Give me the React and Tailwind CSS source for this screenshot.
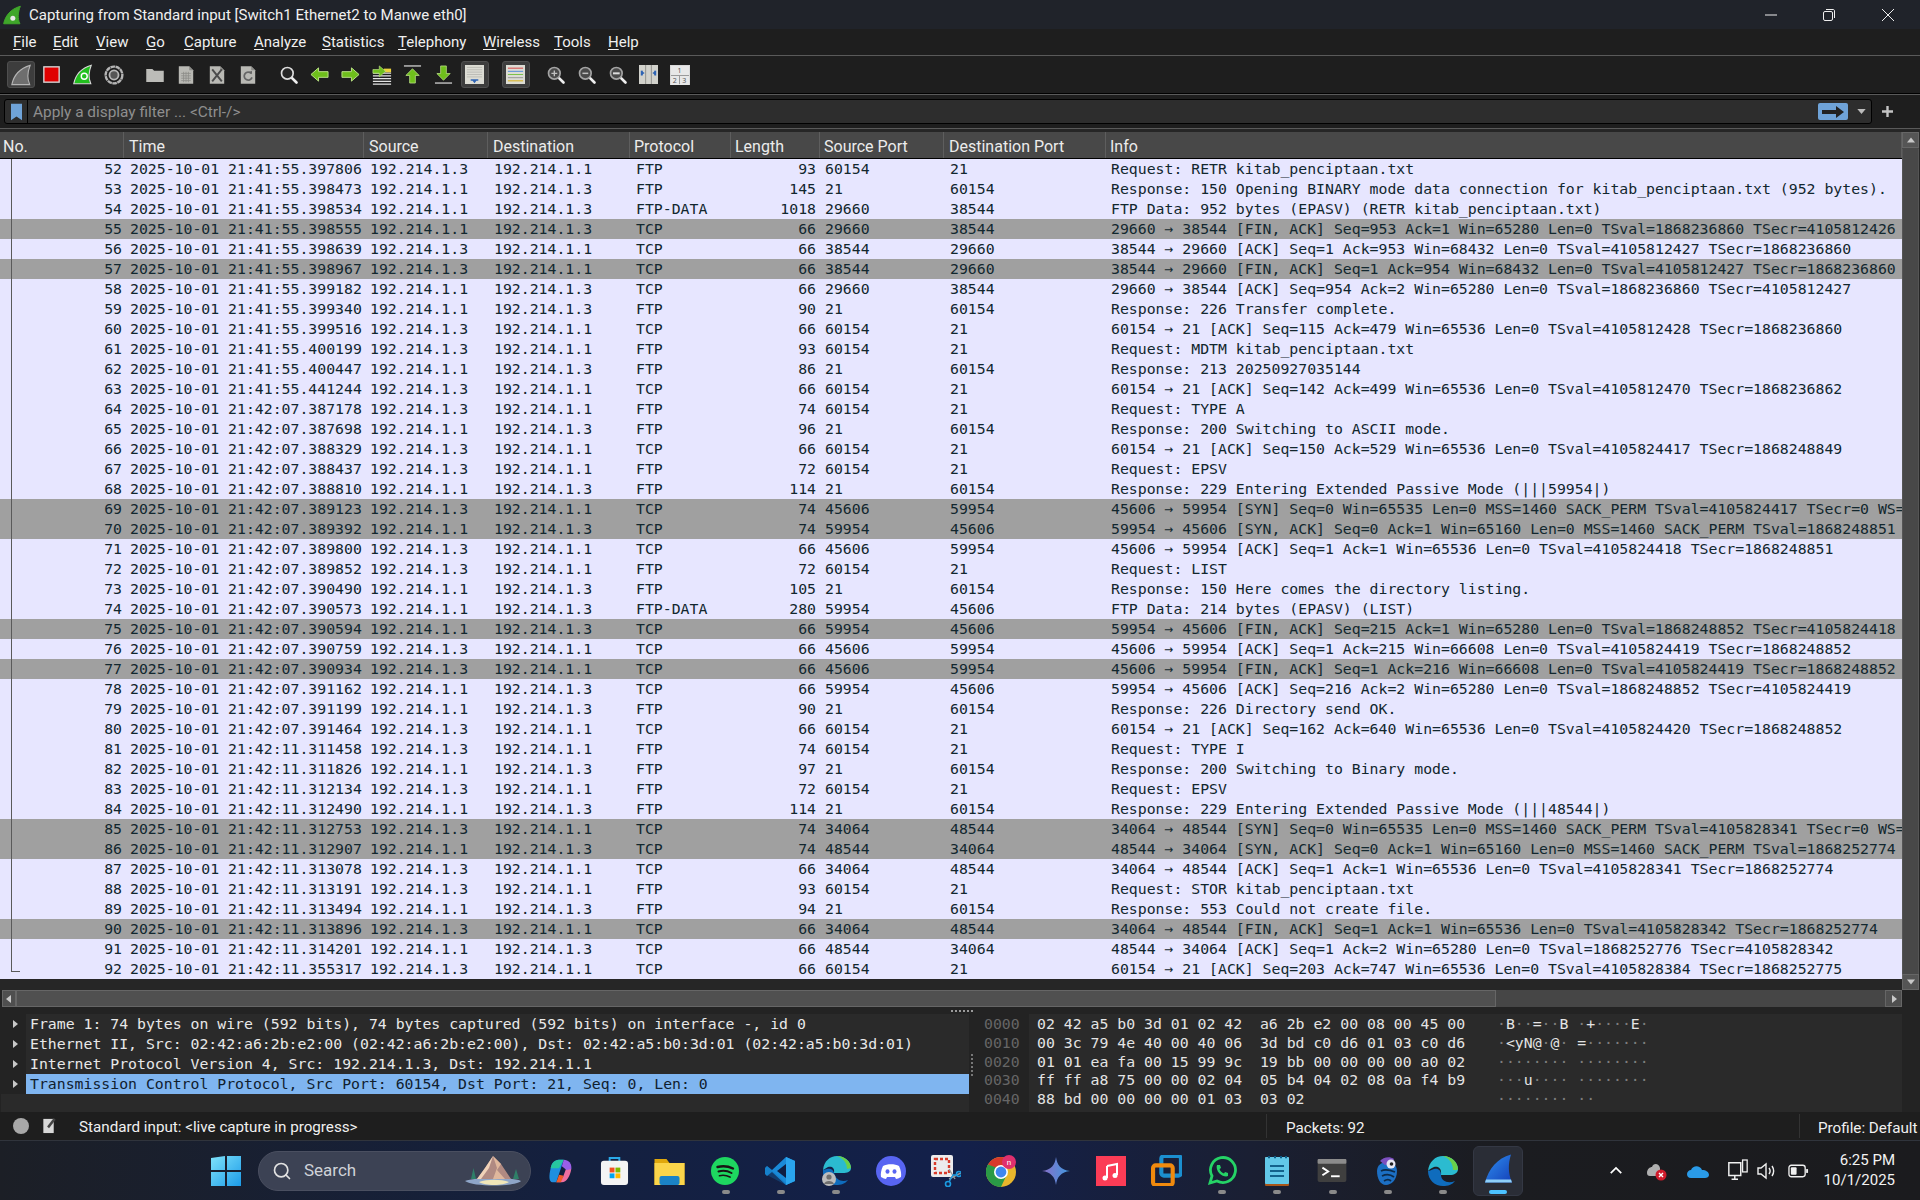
import React from 'react';
import { Search } from 'lucide-react';

const A = '192.214.1.3';
const B = '192.214.1.1';
const ui = "font-['Roboto',sans-serif]";
const mono = "font-['DejaVu_Sans_Mono',monospace] text-[14.82px]";

// no, time, source, dest, proto, length, sport, dport, info, dark
const rows = [
  [52, '21:41:55.397806', A, B, 'FTP', 93, 60154, 21, 'Request: RETR kitab_penciptaan.txt'],
  [53, '21:41:55.398473', B, A, 'FTP', 145, 21, 60154, 'Response: 150 Opening BINARY mode data connection for kitab_penciptaan.txt (952 bytes).'],
  [54, '21:41:55.398534', B, A, 'FTP-DATA', 1018, 29660, 38544, 'FTP Data: 952 bytes (EPASV) (RETR kitab_penciptaan.txt)'],
  [55, '21:41:55.398555', B, A, 'TCP', 66, 29660, 38544, '29660 → 38544 [FIN, ACK] Seq=953 Ack=1 Win=65280 Len=0 TSval=1868236860 TSecr=4105812426', 1],
  [56, '21:41:55.398639', A, B, 'TCP', 66, 38544, 29660, '38544 → 29660 [ACK] Seq=1 Ack=953 Win=68432 Len=0 TSval=4105812427 TSecr=1868236860'],
  [57, '21:41:55.398967', A, B, 'TCP', 66, 38544, 29660, '38544 → 29660 [FIN, ACK] Seq=1 Ack=954 Win=68432 Len=0 TSval=4105812427 TSecr=1868236860', 1],
  [58, '21:41:55.399182', B, A, 'TCP', 66, 29660, 38544, '29660 → 38544 [ACK] Seq=954 Ack=2 Win=65280 Len=0 TSval=1868236860 TSecr=4105812427'],
  [59, '21:41:55.399340', B, A, 'FTP', 90, 21, 60154, 'Response: 226 Transfer complete.'],
  [60, '21:41:55.399516', A, B, 'TCP', 66, 60154, 21, '60154 → 21 [ACK] Seq=115 Ack=479 Win=65536 Len=0 TSval=4105812428 TSecr=1868236860'],
  [61, '21:41:55.400199', A, B, 'FTP', 93, 60154, 21, 'Request: MDTM kitab_penciptaan.txt'],
  [62, '21:41:55.400447', B, A, 'FTP', 86, 21, 60154, 'Response: 213 20250927035144'],
  [63, '21:41:55.441244', A, B, 'TCP', 66, 60154, 21, '60154 → 21 [ACK] Seq=142 Ack=499 Win=65536 Len=0 TSval=4105812470 TSecr=1868236862'],
  [64, '21:42:07.387178', A, B, 'FTP', 74, 60154, 21, 'Request: TYPE A'],
  [65, '21:42:07.387698', B, A, 'FTP', 96, 21, 60154, 'Response: 200 Switching to ASCII mode.'],
  [66, '21:42:07.388329', A, B, 'TCP', 66, 60154, 21, '60154 → 21 [ACK] Seq=150 Ack=529 Win=65536 Len=0 TSval=4105824417 TSecr=1868248849'],
  [67, '21:42:07.388437', A, B, 'FTP', 72, 60154, 21, 'Request: EPSV'],
  [68, '21:42:07.388810', B, A, 'FTP', 114, 21, 60154, 'Response: 229 Entering Extended Passive Mode (|||59954|)'],
  [69, '21:42:07.389123', A, B, 'TCP', 74, 45606, 59954, '45606 → 59954 [SYN] Seq=0 Win=65535 Len=0 MSS=1460 SACK_PERM TSval=4105824417 TSecr=0 WS=', 1],
  [70, '21:42:07.389392', B, A, 'TCP', 74, 59954, 45606, '59954 → 45606 [SYN, ACK] Seq=0 Ack=1 Win=65160 Len=0 MSS=1460 SACK_PERM TSval=1868248851', 1],
  [71, '21:42:07.389800', A, B, 'TCP', 66, 45606, 59954, '45606 → 59954 [ACK] Seq=1 Ack=1 Win=65536 Len=0 TSval=4105824418 TSecr=1868248851'],
  [72, '21:42:07.389852', A, B, 'FTP', 72, 60154, 21, 'Request: LIST'],
  [73, '21:42:07.390490', B, A, 'FTP', 105, 21, 60154, 'Response: 150 Here comes the directory listing.'],
  [74, '21:42:07.390573', B, A, 'FTP-DATA', 280, 59954, 45606, 'FTP Data: 214 bytes (EPASV) (LIST)'],
  [75, '21:42:07.390594', B, A, 'TCP', 66, 59954, 45606, '59954 → 45606 [FIN, ACK] Seq=215 Ack=1 Win=65280 Len=0 TSval=1868248852 TSecr=4105824418', 1],
  [76, '21:42:07.390759', A, B, 'TCP', 66, 45606, 59954, '45606 → 59954 [ACK] Seq=1 Ack=215 Win=66608 Len=0 TSval=4105824419 TSecr=1868248852'],
  [77, '21:42:07.390934', A, B, 'TCP', 66, 45606, 59954, '45606 → 59954 [FIN, ACK] Seq=1 Ack=216 Win=66608 Len=0 TSval=4105824419 TSecr=1868248852', 1],
  [78, '21:42:07.391162', B, A, 'TCP', 66, 59954, 45606, '59954 → 45606 [ACK] Seq=216 Ack=2 Win=65280 Len=0 TSval=1868248852 TSecr=4105824419'],
  [79, '21:42:07.391199', B, A, 'FTP', 90, 21, 60154, 'Response: 226 Directory send OK.'],
  [80, '21:42:07.391464', A, B, 'TCP', 66, 60154, 21, '60154 → 21 [ACK] Seq=162 Ack=640 Win=65536 Len=0 TSval=4105824420 TSecr=1868248852'],
  [81, '21:42:11.311458', A, B, 'FTP', 74, 60154, 21, 'Request: TYPE I'],
  [82, '21:42:11.311826', B, A, 'FTP', 97, 21, 60154, 'Response: 200 Switching to Binary mode.'],
  [83, '21:42:11.312134', A, B, 'FTP', 72, 60154, 21, 'Request: EPSV'],
  [84, '21:42:11.312490', B, A, 'FTP', 114, 21, 60154, 'Response: 229 Entering Extended Passive Mode (|||48544|)'],
  [85, '21:42:11.312753', A, B, 'TCP', 74, 34064, 48544, '34064 → 48544 [SYN] Seq=0 Win=65535 Len=0 MSS=1460 SACK_PERM TSval=4105828341 TSecr=0 WS=', 1],
  [86, '21:42:11.312907', B, A, 'TCP', 74, 48544, 34064, '48544 → 34064 [SYN, ACK] Seq=0 Ack=1 Win=65160 Len=0 MSS=1460 SACK_PERM TSval=1868252774', 1],
  [87, '21:42:11.313078', A, B, 'TCP', 66, 34064, 48544, '34064 → 48544 [ACK] Seq=1 Ack=1 Win=65536 Len=0 TSval=4105828341 TSecr=1868252774'],
  [88, '21:42:11.313191', A, B, 'FTP', 93, 60154, 21, 'Request: STOR kitab_penciptaan.txt'],
  [89, '21:42:11.313494', B, A, 'FTP', 94, 21, 60154, 'Response: 553 Could not create file.'],
  [90, '21:42:11.313896', A, B, 'TCP', 66, 34064, 48544, '34064 → 48544 [FIN, ACK] Seq=1 Ack=1 Win=65536 Len=0 TSval=4105828342 TSecr=1868252774', 1],
  [91, '21:42:11.314201', B, A, 'TCP', 66, 48544, 34064, '48544 → 34064 [ACK] Seq=1 Ack=2 Win=65280 Len=0 TSval=1868252776 TSecr=4105828342'],
  [92, '21:42:11.355317', A, B, 'TCP', 66, 60154, 21, '60154 → 21 [ACK] Seq=203 Ack=747 Win=65536 Len=0 TSval=4105828384 TSecr=1868252775'],
];

const columns = 'grid-cols-[124px_240px_124px_142px_101px_89px_124px_162px_796px]';
const headers = [
  ['No.', 'pl-[3px]'],
  ['Time', 'pl-[5px]'],
  ['Source', 'pl-[5px]'],
  ['Destination', 'pl-[5px]'],
  ['Protocol', 'pl-[4px]'],
  ['Length', 'pl-[4px]'],
  ['Source Port', 'pl-[4px]'],
  ['Destination Port', 'pl-[5px]'],
  ['Info', 'pl-[4px]'],
];

const details = [
  'Frame 1: 74 bytes on wire (592 bits), 74 bytes captured (592 bits) on interface -, id 0',
  'Ethernet II, Src: 02:42:a6:2b:e2:00 (02:42:a6:2b:e2:00), Dst: 02:42:a5:b0:3d:01 (02:42:a5:b0:3d:01)',
  'Internet Protocol Version 4, Src: 192.214.1.3, Dst: 192.214.1.1',
  'Transmission Control Protocol, Src Port: 60154, Dst Port: 21, Seq: 0, Len: 0',
];

const bytes = [
  ['0000', '02 42 a5 b0 3d 01 02 42  a6 2b e2 00 08 00 45 00', '·B··=··B ·+····E·'],
  ['0010', '00 3c 79 4e 40 00 40 06  3d bd c0 d6 01 03 c0 d6', '·<yN@·@· =·······'],
  ['0020', '01 01 ea fa 00 15 99 9c  19 bb 00 00 00 00 a0 02', '········ ········'],
  ['0030', 'ff ff a8 75 00 00 02 04  05 b4 04 02 08 0a f4 b9', '···u···· ········'],
  ['0040', '88 bd 00 00 00 00 01 03  03 02', '········ ··'],
];

const menus = ['File', 'Edit', 'View', 'Go', 'Capture', 'Analyze', 'Statistics', 'Telephony', 'Wireless', 'Tools', 'Help'];

const Fin = ({ fill = '#3fa62a', stroke = '#3fa62a', className = 'w-6 h-6', children }) => (
  <svg viewBox="0 0 24 24" className={className}>
    <path d="M2 22.5C4 13 10 5 22 1.5C19 9 18.5 16 21.5 22.5Z" fill={fill} stroke={stroke} strokeWidth="1.2" />
    {children}
  </svg>
);

const Doc = ({ children }) => (
  <svg viewBox="0 0 20 24" className="w-[16px] h-[20px]">
    <path d="M1 1H14L19 6V23H1Z" fill="#b9b9b4" />
    <path d="M14 1L19 6H14Z" fill="#8c8c88" />
    {children}
  </svg>
);

const Glass = ({ children, white }) => (
  <svg viewBox="0 0 24 24" className="w-[20px] h-[20px]">
    <path d="M14.5 14.5L21 21" stroke="#eee" strokeWidth="3.2" strokeLinecap="round" />
    <circle cx="10" cy="10" r="7" fill={white ? '#262626' : '#4a4a4a'} stroke={white ? '#ddd' : '#a4a4a4'} strokeWidth="2" />
    {children}
  </svg>
);

const Arrow = ({ d }) => (
  <svg viewBox="0 0 20 20" className="w-[19px] h-[19px]">
    <path d={d} fill="#6fbf1c" stroke="#bfe58a" strokeWidth="1" />
  </svg>
);

const Lines = ({ children }) => (
  <svg viewBox="0 0 20 24" preserveAspectRatio="none" className="w-[19px] h-[19px]">
    <rect width="20" height="24" fill="#dcdcd4" />
    {children}
  </svg>
);

const group1 = [
  { on: true, icon: <Fin fill="#6e6e6e" stroke="#b5b5b5" className="w-[22px] h-[22px]" /> },
  {
    icon: (
      <svg viewBox="0 0 20 20" className="w-[17px] h-[17px]">
        <rect x="1" y="1" width="18" height="18" fill="#e00000" stroke="#d8d8d8" strokeWidth="1.6" />
      </svg>
    ),
  },
  {
    icon: (
      <Fin fill="#22c01e" stroke="#d9d9d9" className="w-[21px] h-[21px]">
        <circle cx="14" cy="14" r="3.4" fill="none" stroke="#fff" strokeWidth="1.6" />
      </Fin>
    ),
  },
  {
    icon: (
      <svg viewBox="0 0 22 22" className="w-[20px] h-[20px]">
        <circle cx="11" cy="11" r="9.2" fill="none" stroke="#b5b5b5" strokeWidth="2.6" strokeDasharray="5 .6" />
        <circle cx="11" cy="11" r="5" fill="#555" stroke="#b5b5b5" strokeWidth="2" />
      </svg>
    ),
  },
];

const group2 = [
  {
    icon: (
      <svg viewBox="0 0 20 16" className="w-[18px] h-[14px]">
        <path d="M0 1H7L9 3H20V16H0Z" fill="#bcbcb8" />
      </svg>
    ),
  },
  {
    icon: (
      <Doc>
        <path d="M4 10H16M4 13H16M4 16H16M4 19H16M7 8V21M10 8V21M13 8V21" stroke="#8b8b88" strokeWidth="1" />
      </Doc>
    ),
  },
  {
    icon: (
      <Doc>
        <path d="M4 5L16 20M16 5L4 20" stroke="#4b4b4b" strokeWidth="2.4" />
      </Doc>
    ),
  },
  {
    icon: (
      <Doc>
        <path d="M14 10A5 5 0 1 0 15 15" fill="none" stroke="#666" strokeWidth="2.2" />
        <path d="M11 8L15 7L15 11Z" fill="#666" />
      </Doc>
    ),
  },
];

const group3 = [
  { icon: <Glass white /> },
  { icon: <Arrow d="M1 10L9 3V7H19V13H9V17Z" /> },
  { icon: <Arrow d="M19 10L11 3V7H1V13H11V17Z" /> },
  {
    icon: (
      <svg viewBox="0 0 22 22" className="w-[20px] h-[20px]">
        <path d="M1 9H21M1 12H21M1 15H21M1 18H21M1 21H21" stroke="#e4e4e4" strokeWidth="1.4" />
        <rect x="13" y="4" width="8" height="4" fill="#ecd23e" />
        <path d="M1 5H8V1L15 7L8 13V9H1Z" fill="#6fbf1c" stroke="#bfe58a" strokeWidth=".7" />
      </svg>
    ),
  },
  {
    icon: (
      <svg viewBox="0 0 20 20" className="w-[19px] h-[19px]">
        <path d="M1 1H19" stroke="#b8b8b8" strokeWidth="1.6" />
        <path d="M10 4L17 11H13V19H7V11H3Z" fill="#6fbf1c" stroke="#bfe58a" strokeWidth=".8" />
      </svg>
    ),
  },
  {
    icon: (
      <svg viewBox="0 0 20 20" className="w-[19px] h-[19px]">
        <path d="M1 19H19" stroke="#b8b8b8" strokeWidth="1.6" />
        <path d="M10 16L17 9H13V1H7V9H3Z" fill="#6fbf1c" stroke="#bfe58a" strokeWidth=".8" />
      </svg>
    ),
  },
  {
    on: true,
    icon: (
      <Lines>
        <path d="M2 3H18M2 6H18M2 9H18M2 12H18M2 15H18" stroke="#b0b0aa" strokeWidth=".8" />
        <path d="M6 18H14V20H12L10 23L8 20H6Z" fill="#2f64b4" />
      </Lines>
    ),
  },
];

const group4 = [
  {
    on: true,
    icon: (
      <Lines>
        <path d="M2 4H18" stroke="#d84a4a" strokeWidth="1.3" />
        <path d="M2 8H18" stroke="#5a8fd8" strokeWidth="1.3" />
        <path d="M2 12H18" stroke="#7dc24a" strokeWidth="1.3" />
        <path d="M2 16H18" stroke="#9a9a9a" strokeWidth="1.3" />
        <path d="M2 20H18" stroke="#d8b21c" strokeWidth="1.3" />
      </Lines>
    ),
  },
];

const group5 = [
  {
    icon: (
      <Glass>
        <path d="M6.5 10H13.5M10 6.5V13.5" stroke="#c0c0c0" strokeWidth="1.6" />
      </Glass>
    ),
  },
  {
    icon: (
      <Glass>
        <path d="M6.5 10H13.5" stroke="#c0c0c0" strokeWidth="1.8" />
      </Glass>
    ),
  },
  {
    icon: (
      <Glass>
        <path d="M6 10H14" stroke="#dcdcdc" strokeWidth="2.4" />
      </Glass>
    ),
  },
  {
    icon: (
      <svg viewBox="0 0 20 20" className="w-[19px] h-[19px]">
        <rect width="20" height="20" fill="#d2d2cc" />
        <path d="M7 0V20M13 0V20" stroke="#8e8e8a" strokeWidth="1" />
        <path d="M2 6L6 8.5L2 11ZM18 6L14 8.5L18 11Z" fill="#2f64b4" />
        <rect x="2" y="6" width="2" height="5" fill="#2f64b4" />
        <rect x="16" y="6" width="2" height="5" fill="#2f64b4" />
      </svg>
    ),
  },
  {
    icon: (
      <div className="w-[20px] h-[20px] bg-[#9a9a9a] grid grid-cols-2 gap-[1px] border border-[#dadada]">
        <span className="col-span-2 bg-[#e8e8e8] text-[7px] leading-[9px] text-center text-[#555]">1</span>
        <span className="bg-[#e8e8e8] text-[7px] leading-[9px] text-center text-[#555]">2</span>
        <span className="bg-[#e8e8e8] text-[7px] leading-[9px] text-center text-[#555]">3</span>
      </div>
    ),
  },
];

const ToolGroup = ({ items, className = '' }) => (
  <div className={`flex ${className}`}>
    {items.map((item, i) => (
      <div key={i} className="w-[31px] h-[37px] flex items-center justify-center">
        <div
          className={`w-[28px] h-[27px] flex items-center justify-center rounded-[3px] ${
            item.on ? 'bg-[#3d3d3d] border border-[#4f4f4f]' : ''
          }`}
        >
          {item.icon}
        </div>
      </div>
    ))}
  </div>
);

const Triangle = ({ dir }) => (
  <svg viewBox="0 0 10 10" className="w-[10px] h-[10px]">
    <path
      d={
        dir === 'up' ? 'M1 7.5L5 2.5L9 7.5Z' : dir === 'down' ? 'M1 2.5L5 7.5L9 2.5Z' : dir === 'left' ? 'M7 1L2 5L7 9Z' : 'M3 1L8 5L3 9Z'
      }
      fill="#c8c8c8"
    />
  </svg>
);

const SectionLine = () => <div className="h-[1px] bg-[#5a5a5a] shrink-0" />;

const PacketRow = ({ row }) => {
  const [no, time, source, dest, proto, length, sport, dport, info, dark] = row;
  return (
    <div
      className={`grid ${columns} h-[20px] leading-[20px] text-[#12272e] whitespace-pre overflow-hidden ${
        dark ? 'bg-[#a0a0a0]' : 'bg-[#e7e6ff]'
      }`}
    >
      <div className="text-right pr-[2px]">{no}</div>
      <div className="pl-[6px]">2025-10-01 {time}</div>
      <div className="pl-[6px]">{source}</div>
      <div className="pl-[6px]">{dest}</div>
      <div className="pl-[6px]">{proto}</div>
      <div className="text-right pr-[4px]">{length}</div>
      <div className="pl-[5px]">{sport}</div>
      <div className="pl-[6px]">{dport}</div>
      <div className="pl-[5px]">{info}</div>
    </div>
  );
};

const PacketList = () => (
  <div className="flex h-[858px] shrink-0 bg-[#262626]">
    <div className="w-[1902px] relative flex flex-col">
      <div className={`grid ${columns} h-[27px] bg-[#484848] border-b border-black text-[#ececec] text-[16px] leading-[30px] ${ui}`}>
        {headers.map(([label, pad]) => (
          <div key={label} className={`${pad} border-r border-[#5e5e5e] overflow-hidden whitespace-nowrap`}>
            {label}
          </div>
        ))}
      </div>
      <div className={mono}>
        {rows.map((row) => (
          <PacketRow key={row[0]} row={row} />
        ))}
      </div>
      {/* conversation bracket drawn over the packet rows */}
      <div className="absolute left-[11px] top-[27px] w-[9px] h-[813px] border-l border-b border-[#5a5a5a]" />
    </div>
    <div className="w-[17px] flex flex-col bg-[#484848]">
      <div className="h-[16px] flex items-center justify-center bg-[#555] border border-[#666]">
        <Triangle dir="up" />
      </div>
      <div className="flex-1 mt-[1px] border-x border-[#555]" />
      <div className="h-[16px] flex items-center justify-center bg-[#555] border border-[#666]">
        <Triangle dir="down" />
      </div>
    </div>
  </div>
);

const HScroll = () => (
  <div className="flex h-[17px] shrink-0 bg-[#232323] pl-[2px] pr-[18px]">
    <div className="w-[14px] flex items-center justify-center bg-[#4f4f4f] border border-[#666]">
      <Triangle dir="left" />
    </div>
    <div className="w-[1480px] bg-[#505050] border border-[#666]" />
    <div className="flex-1 bg-[#464646]" />
    <div className="w-[17px] flex items-center justify-center bg-[#4f4f4f] border border-[#666]">
      <Triangle dir="right" />
    </div>
  </div>
);

const ByteRow = ({ row }) => {
  const [offset, hex, ascii] = row;
  return (
    <div className="flex h-[18.75px] leading-[18.75px] whitespace-pre">
      <div className="w-[53px] -ml-[53px] text-[#666]">{offset}</div>
      <div className="w-[460px] text-[#e4e4e4]">{hex}</div>
      <div>
        {ascii.split('').map((ch, i) => (
          <span key={i} className={ch === '·' ? 'text-[#7d7d7d]' : 'text-[#e4e4e4]'}>
            {ch}
          </span>
        ))}
      </div>
    </div>
  );
};

const DetailPanes = () => (
  <div className={`flex h-[105px] shrink-0 bg-[#232323] pt-[7px] relative ${mono}`}>
    <div className="w-[968px] bg-[#2a2a2a] flex flex-col ml-[1px] h-[98px] overflow-hidden">
      {details.map((line, i) => (
        <div key={line} className="flex h-[20px] leading-[20px] whitespace-pre">
          <div className="w-[25px] h-[20px] flex items-center justify-end pr-[6px] bg-[#232323]">
            <Triangle dir="right" />
          </div>
          <div className={`flex-1 pl-[4px] ${i === 3 ? 'bg-[#7fb5f0] text-[#10202e]' : 'text-[#e8e8e8]'}`}>{line}</div>
        </div>
      ))}
    </div>
    <div className="w-[60px]" />
    <div className="w-[873px] h-[98px] bg-[#2a2a2a] pl-[8px] pt-[1px]">
      {bytes.map((row) => (
        <ByteRow key={row[0]} row={row} />
      ))}
    </div>
    {/* splitter grips lie over the panes */}
    <div className="absolute left-[951px] top-[3px] w-[22px] h-[3px] border-t-2 border-dotted border-[#9a9a9a]" />
    <div className="absolute left-[971px] top-[47px] h-[22px] border-l-2 border-dotted border-[#777]" />
  </div>
);

const StatusBar = () => (
  <div className={`flex items-center h-[28px] shrink-0 bg-[#1e1e1e] text-[#f0f0f0] text-[15.200px] ${ui}`}>
    <div className="w-[1266px] flex items-center pl-[13px]">
      <div className="w-[16px] h-[16px] rounded-full bg-[#a8a8a8]" />
      <svg viewBox="0 0 14 18" className="w-[14px] h-[17px] ml-[13px]">
        <rect x="1" y="2" width="11" height="15" fill="#d8d8d8" />
        <path d="M5 10L12 1L14 3L7 12Z" fill="#444" />
      </svg>
      <span className="ml-[23px] pt-[3px]">Standard input: &lt;live capture in progress&gt;</span>
    </div>
    <div className="w-[533px] h-[24px] border-l border-[#333] pl-[19px] leading-[28px]">Packets: 92</div>
    <div className="flex-1 h-[24px] border-l border-[#333] pl-[18px] leading-[28px] whitespace-nowrap">Profile: Default</div>
  </div>
);

const apps = [
  {
    icon: (
      <svg viewBox="0 0 30 30" className="w-[28px] h-[28px]">
        <path d="M5 12C6 5 11 3 14 3H19L11 27H7C3 27 3 20 5 12Z" fill="#1f8fe0" />
        <path d="M5 12C6 6 10 3 14 3H19L14 12Z" fill="#27c6a0" />
        <path d="M11 27H17C22 27 26 20 27 13C27 9 26 7 24 6L18 22Z" fill="#ef6fa0" />
        <path d="M19 3C24 3 28 7 27 13L22 14L17 10Z" fill="#9a5fe8" />
        <path d="M14 19L11 27H16L19 20Z" fill="#f25c2a" />
      </svg>
    ),
  },
  {
    icon: (
      <svg viewBox="0 0 30 32" className="w-[29px] h-[31px]">
        <path d="M10 8V3H20V8" fill="none" stroke="#2aa9e8" strokeWidth="2" />
        <rect x="1" y="6" width="28" height="25" rx="3" fill="#f4f4f4" />
        <rect x="10" y="13" width="5" height="5" fill="#f25022" />
        <rect x="16" y="13" width="5" height="5" fill="#7fba00" />
        <rect x="10" y="19" width="5" height="5" fill="#00a4ef" />
        <rect x="16" y="19" width="5" height="5" fill="#ffb900" />
      </svg>
    ),
  },
  {
    icon: (
      <svg viewBox="0 0 30 28" className="w-[31px] h-[28px]">
        <path d="M0 2H12L15 6H30V28H0Z" fill="#e0a80c" />
        <rect y="6" width="30" height="22" fill="#fbd54a" />
        <rect x="5" y="19" width="20" height="9" rx="2" fill="#1b83c6" />
      </svg>
    ),
  },
  {
    dot: true,
    icon: (
      <svg viewBox="0 0 28 28" className="w-[28px] h-[28px]">
        <circle cx="14" cy="14" r="14" fill="#1ed760" />
        <path d="M6.5 10C12 8.5 17 9 22 11.5" stroke="#191414" strokeWidth="2.4" fill="none" strokeLinecap="round" />
        <path d="M7.5 14.5C12 13.2 16.5 13.7 20.5 16" stroke="#191414" strokeWidth="2" fill="none" strokeLinecap="round" />
        <path d="M8.5 18.7C12 17.8 15.5 18.2 19 20" stroke="#191414" strokeWidth="1.7" fill="none" strokeLinecap="round" />
      </svg>
    ),
  },
  {
    dot: true,
    icon: (
      <svg viewBox="0 0 30 30" className="w-[30px] h-[30px]">
        <path d="M21 1L30 5V25L21 29L7 16L2 20L0 18V12L2 10L7 14Z" fill="#1a8ad8" />
        <path d="M21 8L12 15L21 22Z" fill="#0f1e42" />
        <path d="M21 1L30 5V25L21 29Z" fill="#2aa5ee" />
        <path d="M2 10L21 27V29L0 18V12Z" fill="#0e6fb8" opacity=".35" />
      </svg>
    ),
  },
  {
    dot: true,
    icon: (
      <svg viewBox="0 0 30 32" className="w-[30px] h-[32px]">
        <path d="M2 15C3 6 9 1 16 1C24 1 30 7 30 13C30 17 26 18 22 18H13C14 12 10 11 7 12Z" fill="#2bbbd0" />
        <path d="M30 13C30 7 24 1 16 1C22 3 26 8 26 14Z" fill="#6ad04a" />
        <path d="M2 15C1 24 8 30 15 30C20 30 24 29 27 25C22 27 15 26 13 18C12 14 9 13 6 14Z" fill="#0f6cbd" />
        <circle cx="8" cy="24" r="7" fill="#bdbdbd" />
        <circle cx="8" cy="22" r="2.6" fill="#6f6f6f" />
        <path d="M3 29C4 25 12 25 13 29Z" fill="#6f6f6f" />
      </svg>
    ),
  },
  {
    icon: (
      <svg viewBox="0 0 30 30" className="w-[30px] h-[30px]">
        <circle cx="15" cy="15" r="15" fill="#5865f2" />
        <path d="M7 10C11 7.5 19 7.5 23 10C25 14 25.5 18 25 21C23 22 21 23 20 23L19 21H11L10 23C9 23 7 22 5 21C4.500 18 5 14 7 10Z" fill="#fff" />
        <ellipse cx="11.500" cy="15.500" rx="2" ry="2.300" fill="#5865f2" />
        <ellipse cx="18.500" cy="15.500" rx="2" ry="2.300" fill="#5865f2" />
      </svg>
    ),
  },
  {
    icon: (
      <svg viewBox="0 0 30 32" className="w-[30px] h-[32px]">
        <rect x="0" y="0" width="22" height="22" rx="2" fill="#ececec" />
        <rect x="4" y="4" width="14" height="14" fill="none" stroke="#d83b2a" strokeWidth="2.400" strokeDasharray="3 2" />
        <path d="M18 14L24 24M18 24L30 18" stroke="#9a9a9a" strokeWidth="1.400" />
        <circle cx="17" cy="29" r="2.500" fill="none" stroke="#1b9ae0" strokeWidth="1.600" />
        <circle cx="28" cy="19" r="2.500" fill="none" stroke="#1b9ae0" strokeWidth="1.600" />
        <path d="M18 27L22 20L26 20" fill="none" stroke="#1b9ae0" strokeWidth="1.400" />
      </svg>
    ),
  },
  {
    icon: (
      <svg viewBox="0 0 30 32" className="w-[30px] h-[32px]">
        <circle cx="15" cy="17" r="15" fill="#e8b62c" />
        <path d="M15 17L2 9.500A15 15 0 0 1 28 9.500Z" fill="#d8392b" />
        <path d="M2 9.500A15 15 0 0 0 15 32L22 17Z" fill="#2a9a46" />
        <circle cx="15" cy="17" r="7" fill="#fff" />
        <circle cx="15" cy="17" r="5.400" fill="#3f86f0" />
        <circle cx="23" cy="7" r="7" fill="#e0306e" />
        <text x="23" y="10" textAnchor="middle" fontSize="8" fill="#fff" fontFamily="Roboto, sans-serif">n</text>
      </svg>
    ),
  },
  {
    icon: (
      <svg viewBox="0 0 30 30" className="w-[30px] h-[30px]">
        <defs>
          <linearGradient id="gem" x1="0" y1="0" x2="1" y2="0">
            <stop offset="0" stopColor="#8a6ec8" />
            <stop offset="1" stopColor="#3f9ae0" />
          </linearGradient>
        </defs>
        <path d="M15 1C16 9 20 14 29 15C20 16 16 21 15 29C14 21 10 16 1 15C10 14 14 9 15 1Z" fill="url(#gem)" />
      </svg>
    ),
  },
  {
    icon: (
      <svg viewBox="0 0 30 30" className="w-[30px] h-[30px]">
        <rect width="30" height="30" fill="#fb3c56" />
        <path d="M11 10L21 8V19" fill="none" stroke="#fff" strokeWidth="2" />
        <path d="M11 10V22" stroke="#fff" strokeWidth="2" />
        <circle cx="9" cy="22" r="2.500" fill="#fff" />
        <circle cx="19" cy="19.500" r="2.500" fill="#fff" />
      </svg>
    ),
  },
  {
    icon: (
      <svg viewBox="0 0 30 30" className="w-[31px] h-[31px]">
        <rect x="10" y="1" width="19" height="19" rx="2.500" fill="none" stroke="#1b8fd0" strokeWidth="4" />
        <rect x="2" y="10" width="19" height="19" rx="2.500" fill="none" stroke="#f08a0e" strokeWidth="4" />
      </svg>
    ),
  },
  {
    dot: true,
    icon: (
      <svg viewBox="0 0 30 30" className="w-[30px] h-[30px]">
        <path d="M3 27L5 20A12.500 12.500 0 1 1 10 25Z" fill="none" stroke="#25d366" strokeWidth="2.800" />
        <path d="M10 9C9 11 10 15 12.500 17.500C15 20 19 21 21 20L21 17L18 16L17 17.500C15 17 13 15 12.500 13L14 12L13 9Z" fill="#25d366" />
      </svg>
    ),
  },
  {
    dot: true,
    icon: (
      <svg viewBox="0 0 24 30" className="w-[24px] h-[30px]">
        <rect y="1" width="24" height="29" rx="1" fill="#a8561a" />
        <rect y="1" width="24" height="27" rx="1" fill="#62c8e8" />
        <path d="M5 10H19M5 15H19M5 20H19" stroke="#13638c" strokeWidth="2.200" />
        <path d="M3 1H5M9 1H11M15 1H17M20 1H22" stroke="#0d5a84" strokeWidth="2.400" />
      </svg>
    ),
  },
  {
    dot: true,
    icon: (
      <svg viewBox="0 0 30 24" className="w-[30px] h-[23px]">
        <rect width="30" height="24" rx="2" fill="#3f3f3f" />
        <rect width="30" height="5" rx="1" fill="#8c8c8c" />
        <path d="M5 9L11 13L5 17" fill="none" stroke="#fff" strokeWidth="2" />
        <path d="M14 18H23" stroke="#fff" strokeWidth="2" />
      </svg>
    ),
  },
  {
    dot: true,
    icon: (
      <svg viewBox="0 0 26 30" className="w-[26px] h-[30px]">
        <path d="M3 15C3 9 8 6 13 6C18 6 23 9 23 15C23 24 17 29 12 29C6 29 3 22 3 15Z" fill="#1c6fc4" />
        <path d="M6 5C9 1 16 0 20 3L18 8L11 9Z" fill="#7c4fc0" />
        <circle cx="17" cy="8" r="4.500" fill="#e8e8f4" />
        <circle cx="17.500" cy="8" r="1.800" fill="#222" />
        <path d="M7 15C11 13 16 14 21 16M8 20C12 18 16 18 20 21M10 25C13 23 15 23 17 25" stroke="#0c2a4a" strokeWidth="1.800" fill="none" />
      </svg>
    ),
  },
  {
    dot: true,
    icon: (
      <svg viewBox="0 0 30 30" className="w-[30px] h-[30px]">
        <path d="M0 15C1 6 7 0 15 0C24 0 30 7 30 13C30 17 26 19 22 19H13C14 12 10 10 6 11C3 12 1 14 0 15Z" fill="#2bbbd0" />
        <path d="M30 13C30 7 24 0 15 0C21 2 25 7 25 14C28 14 30 14 30 13Z" fill="#6ad04a" />
        <path d="M0 15C0 24 7 30 15 30C20 30 24 29 27 25C20 28 13 25 13 19C13 14 10 12 6 13C3 14 1 15 0 15Z" fill="#0f6cbd" />
      </svg>
    ),
  },
];

const Taskbar = () => (
  <div className="flex items-center flex-1 border-t border-[#30343c] bg-[linear-gradient(90deg,#1c1f26_0%,#14203f_30%,#13204a_50%,#1a1f33_65%,#1b1c20_78%,#1b1b1e_100%)] pl-[211px] relative">
    <svg viewBox="0 0 30 30" className="w-[30px] h-[30px] shrink-0">
      <defs>
        <linearGradient id="win" x1="0" y1="0" x2="1" y2="1">
          <stop offset="0" stopColor="#7fe3fb" />
          <stop offset="1" stopColor="#1c9be8" />
        </linearGradient>
      </defs>
      <path d="M0 2L14 0V14H0ZM16 0H30V14H16ZM0 16H14V30H0ZM16 16H30V30H16Z" fill="url(#win)" />
    </svg>
    <div className="ml-[17px] w-[273px] h-[40px] rounded-full bg-[#3c4254] border border-[#4a4f60] flex items-center pl-[13px] shrink-0">
      <Search className="w-[20px] h-[20px] text-[#e2e2e2]" strokeWidth={2} />
      <span className={`ml-[12px] text-[17px] text-[#cfd2d8] ${ui}`}>Search</span>
      <svg viewBox="0 0 60 34" className="w-[60px] h-[34px] ml-auto mr-[7px]">
        <path d="M2 27C12 23 48 23 58 27C52 33 10 33 2 27Z" fill="#8fa6c8" />
        <path d="M16 28C24 25 38 25 46 28C40 32 22 32 16 28Z" fill="#f0e6b8" />
        <path d="M14 25L22 14L30 2L38 10L48 25Z" fill="#b08a82" />
        <path d="M30 2L26 14L18 25H14L22 14Z" fill="#f0d2b8" />
        <path d="M30 2L38 10L34 16L42 25H30L34 14Z" fill="#dfb79c" />
        <path d="M8 25L10.500 14L13 25ZM50 25L53 15L56 25Z" fill="#2f7f68" />
      </svg>
    </div>
    <div className="flex ml-[1px]">
      {apps.map((app, i) => (
        <div key={i} className="w-[55.200px] h-[59px] relative flex items-center justify-center shrink-0">
          {app.icon}
          {app.dot && <span className="absolute left-[24px] top-[49px] w-[8px] h-[4px] rounded-full bg-[#8a8a8a]" />}
        </div>
      ))}
      <div className="w-[55px] h-[59px] flex items-center justify-center shrink-0">
        <div className="w-[50px] h-[50px] rounded-md bg-[#2a2d36] border border-[#343844] relative flex items-center justify-center">
          <svg viewBox="0 0 28 30" className="w-[28px] h-[31px] -mt-[5px]">
            <defs>
              <linearGradient id="fin" x1="0" y1="0" x2="1" y2="1">
                <stop offset="0" stopColor="#2f8ff0" />
                <stop offset="1" stopColor="#1440b8" />
              </linearGradient>
            </defs>
            <path d="M1 29C5 15 13 5 27 1C24 10 24 20 28 29Z" fill="url(#fin)" />
            <path d="M1 29H28L27 26H2Z" fill="#8fd0f8" />
          </svg>
          <span className="absolute left-[15px] top-[43px] w-[18px] h-[4px] rounded-full bg-[#4cc2ff]" />
        </div>
      </div>
    </div>
    <div className="flex items-center ml-[84px] text-[#f0f0f0]">
      <svg viewBox="0 0 16 10" className="w-[14px] h-[9px]">
        <path d="M2 8L8 2L14 8" fill="none" stroke="#fff" strokeWidth="2" />
      </svg>
      <svg viewBox="0 0 22 20" className="w-[22px] h-[20px] ml-[23px]">
        <path d="M1 12C1 8 4 6 6 6C7 2 13 2 14 7V15H4C2 15 1 14 1 12Z" fill="#b0b0b0" />
        <circle cx="15" cy="14" r="5.500" fill="#d01c2c" />
        <path d="M13 12L17 16M17 12L13 16" stroke="#fff" strokeWidth="1.400" />
      </svg>
      <svg viewBox="0 0 22 14" className="w-[22px] h-[14px] ml-[19px]">
        <path d="M4 14C1 14 0 12 0 10C0 8 2 6 4 6C6 1 13 1 15 6C19 6 22 8 22 11C22 13 20 14 18 14Z" fill="#2a9be8" />
      </svg>
      <svg viewBox="0 0 24 26" className="w-[22px] h-[24px] ml-[18px]">
        <path d="M2 4H15V18H2ZM5 22H12M8.500 18V22" fill="none" stroke="#f0f0f0" strokeWidth="1.600" />
        <rect x="17" y="1" width="5" height="13" fill="#1b1c20" stroke="#f0f0f0" strokeWidth="1.400" />
      </svg>
      <svg viewBox="0 0 20 20" className="w-[20px] h-[20px] ml-[7px]">
        <path d="M2 7H5L10 3V17L5 13H2Z" fill="none" stroke="#f0f0f0" strokeWidth="1.400" />
        <path d="M13 7C14.500 9 14.500 11 13 13M16 5C18 8 18 12 16 15" fill="none" stroke="#f0f0f0" strokeWidth="1.400" />
      </svg>
      <svg viewBox="0 0 22 14" className="w-[21px] h-[14px] ml-[12px]">
        <rect x="1" y="1" width="17" height="12" rx="2.500" fill="none" stroke="#f0f0f0" strokeWidth="1.400" />
        <rect x="3" y="3" width="6" height="8" rx="1" fill="#f0f0f0" />
        <rect x="19" y="5" width="2" height="4" fill="#f0f0f0" />
      </svg>
    </div>
    <div className={`absolute right-[25px] top-[9px] text-right text-[15px] leading-[20px] text-[#f2f2f2] ${ui}`}>
      <div>6:25 PM</div>
      <div>10/1/2025</div>
    </div>
  </div>
);

const App = () => (
  <div className="w-[1920px] h-[1200px] flex flex-col bg-[#1e1e1e] overflow-hidden">
    {/* title bar */}
    <div className={`flex items-center h-[29px] shrink-0 bg-[#20232a] text-[#f0f0f0] text-[15px] ${ui}`}>
      <Fin className="w-[20px] h-[20px] ml-[2px]">
        <circle cx="13" cy="16" r="3" fill="#e8e8e8" />
      </Fin>
      <span className="ml-[7px] pt-[1px]">Capturing from Standard input [Switch1 Ethernet2 to Manwe eth0]</span>
      <div className="ml-auto flex items-center pr-[26px]">
        <svg viewBox="0 0 12 12" className="w-[12px] h-[12px]">
          <path d="M0 6H12" stroke="#eee" strokeWidth="1" />
        </svg>
        <svg viewBox="0 0 12 12" className="w-[12px] h-[12px] ml-[46px]">
          <rect x="0.500" y="2.500" width="9" height="9" rx="1.500" fill="none" stroke="#eee" />
          <path d="M3 .500H10C11 .500 11.500 1 11.500 2V9" fill="none" stroke="#eee" />
        </svg>
        <svg viewBox="0 0 12 12" className="w-[12px] h-[12px] ml-[47px]">
          <path d="M0 0L12 12M12 0L0 12" stroke="#eee" strokeWidth="1" />
        </svg>
      </div>
    </div>
    {/* menu bar */}
    <div className={`grid grid-cols-[40px_43px_50px_38px_70px_68px_76px_85px_71px_54px_40px] items-center pl-[13px] h-[26px] shrink-0 text-[#f0f0f0] text-[15px] ${ui}`}>
      {menus.map((menu) => (
        <span key={menu}>
          <span className="underline underline-offset-2">{menu[0]}</span>
          {menu.slice(1)}
        </span>
      ))}
    </div>
    <SectionLine />
    {/* main toolbar */}
    <div className="flex items-center pl-[5px] h-[37px] shrink-0">
      <ToolGroup items={group1} />
      <ToolGroup items={group2} className="ml-[10px]" />
      <ToolGroup items={group3} className="ml-[10px]" />
      <ToolGroup items={group4} className="ml-[10px]" />
      <ToolGroup items={group5} className="ml-[9px]" />
    </div>
    <div className="h-[1px] bg-black shrink-0" />
    <SectionLine />
    {/* display filter */}
    <div className="flex items-center h-[33px] shrink-0 pl-[4px]">
      <div className="flex items-center w-[1868px] h-[25px] bg-[#2d2d2d] border border-black rounded-[3px]">
        <div className="w-[23px] h-full border-r border-black flex items-center justify-center">
          <svg viewBox="0 0 12 18" className="w-[11px] h-[18px]">
            <path d="M0 0H12V18L6 14L0 18Z" fill="#6fa3d8" />
          </svg>
        </div>
        <span className={`ml-[5px] pt-[2px] text-[15.400px] text-[#8f8f8f] ${ui}`}>Apply a display filter ... &lt;Ctrl-/&gt;</span>
        <div className="ml-auto w-[30px] h-[17px] bg-[#6fa3d8] rounded-[2px] flex items-center justify-center">
          <svg viewBox="0 0 22 12" className="w-[22px] h-[12px]">
            <path d="M0 4H14V0L22 6L14 12V8H0Z" fill="#222" />
          </svg>
        </div>
        <svg viewBox="0 0 10 6" className="w-[9px] h-[5px] ml-[9px] mr-[5px]">
          <path d="M0 0H10L5 6Z" fill="#bbb" />
        </svg>
      </div>
      <svg viewBox="0 0 11 11" className="w-[11px] h-[11px] ml-[10px]">
        <path d="M5.500 0V11M0 5.500H11" stroke="#c4c4c4" strokeWidth="2.400" />
      </svg>
    </div>
    <SectionLine />
    <div className="h-[3px] shrink-0 bg-[#262626]" />
    <PacketList />
    <HScroll />
    <DetailPanes />
    <StatusBar />
    <Taskbar />
  </div>
);

export default App;
